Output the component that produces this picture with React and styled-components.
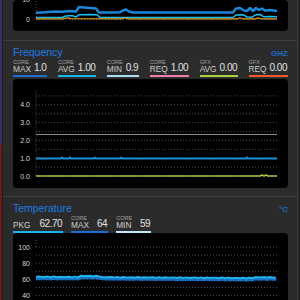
import React from "react";
import styled, { createGlobalStyle } from "styled-components";

const GlobalStyle = createGlobalStyle`
  html, body { margin: 0; padding: 0; background: #2b2b2b; }
  body { font-family: "Liberation Sans", Arial, sans-serif; }
`;

const Window = styled.div`
  width: 300px;
  height: 300px;
  overflow: hidden;
  display: flex;
  background: #2b2b2b;
`;

const EdgeStrip = styled.div`
  width: 2px;
  flex: none;
  background: linear-gradient(to bottom, #3d2d68 0, #3d2d68 145px, #6b1a1a 145px);
  border-right: 1px solid #1c1c1c;
`;

const Panel = styled.div`
  flex: 1;
  min-width: 0;
  display: flex;
  flex-direction: column;
`;

const Rail = styled.div`
  width: 2px;
  flex: none;
  border-left: 1px solid #3a3a3a;
  background: #242424;
`;

const Section = styled.section`
  padding: ${(p) => (p.$first ? "0 9px 9px 10px" : "5px 9px 8px 10px")};
  border-top: ${(p) => (p.$first ? "none" : "1px solid #3d3d3d")};
`;

const Header = styled.div`
  display: flex;
  justify-content: space-between;
  align-items: baseline;
  height: 12px;
`;

const Title = styled.h2`
  margin: 0;
  font-size: 10.5px;
  line-height: 12px;
  font-weight: normal;
  color: #1b7be6;
`;

const Unit = styled.span`
  font-size: 8px;
  font-weight: bold;
  color: #1a6cc8;
`;

const Metrics = styled.div`
  display: flex;
  justify-content: ${(p) => (p.$spread ? "space-between" : "flex-start")};
  gap: ${(p) => (p.$spread ? 7 : 8)}px;
  margin-top: 2px;
`;

const Metric = styled.div`
  display: flex;
  align-items: flex-end;
  gap: ${(p) => p.$gap || 3}px;
  padding: 0 1px 2px 0;
  border-bottom: 2px solid ${(p) => p.$color};
  height: 13px;
`;

const LabelStack = styled.div`
  display: flex;
  flex-direction: column;
`;

const Small = styled.span`
  font-size: 5.5px;
  line-height: 5px;
  color: #a0a0a0;
`;

const Name = styled.span`
  font-size: 8.3px;
  line-height: 8px;
  color: #cfcfcf;
`;

const Value = styled.span`
  font-size: 10px;
  line-height: 11px;
  color: #e2e2e2;
  letter-spacing: -0.5px;
`;

const ChartBox = styled.div`
  margin-top: ${(p) => p.$top || 0}px;
  height: ${(p) => p.$h}px;
  background: #000;
  border-radius: 4px;
  overflow: hidden;
  svg { display: block; }
`;

const poly = (pts) => pts.map((p) => p.join(",")).join(" ");

function Chart({ top, y0, h, ticks, grid, gridTop, lines }) {
  return (
    <ChartBox $h={h} $top={top}>
      <svg width="275" height={h} viewBox={`13 ${y0} 275 ${h}`}>
        <line x1="36" y1={gridTop} x2="36" y2={grid[0]} stroke="#555" strokeDasharray="1 2" />
        {grid.map((y) => (
          <line key={y} x1="36" y1={y} x2="277" y2={y} stroke="#4d4d4d" strokeDasharray="1 2" />
        ))}
        {ticks.map(([y, label]) => (
          <text
            key={label}
            x="30"
            y={y + 2.5}
            textAnchor="end"
            fontSize="7"
            fill="#d8d8d8"
            fontFamily="Liberation Sans, Arial, sans-serif"
          >
            {label}
          </text>
        ))}
        {lines.map((l, i) => (
          <polyline
            key={i}
            points={poly(l.pts)}
            fill="none"
            stroke={l.color}
            strokeWidth={l.w}
            strokeLinejoin="round"
          />
        ))}
      </svg>
    </ChartBox>
  );
}

const topLines = [
  {
    color: "#1e86d8",
    w: 2.5,
    pts: [[36,12.7],[45,12.3],[55,11.5],[62,11.8],[70,11],[76,11.5],[79,7],[84,7.5],[90,8],[96,8.5],[99,12.5],[110,12.5],[120,12.3],[123,10.5],[126,9.5],[129,11.5],[133,12.5],[160,12.5],[200,12.6],[233,12.5],[236,8.5],[240,8],[244,10.5],[247,11],[250,8],[253,11],[256,8],[259,10],[262,8.5],[265,10.5],[270,10],[277,11]],
  },
  {
    color: "#18bff0",
    w: 1.5,
    pts: [[36,17.5],[62,17.5],[66,16],[72,15.5],[76,17],[79,14.8],[90,14.5],[97,14.8],[100,17.5],[233,17.5],[236,15],[243,14.7],[247,17],[252,17.2],[256,14.7],[260,14.5],[264,16.8],[270,16.5],[277,16.8]],
  },
  {
    color: "#e8a020",
    w: 1.2,
    pts: [[36,18.8],[64,18.8],[67,17.8],[71,18.6],[122,18.8],[125,17.8],[128,18.8],[238,18.8],[240,17.8],[243,18.8],[256,18.8],[258,17.9],[261,18.8],[277,18.8]],
  },
];

const fy = (v) => 175.5 - v * 17.8;
const freqGrid = [0, 0.5, 1, 1.5, 2, 2.5, 3, 3.5, 4, 4.5].map(fy);
const freqTicks = [0, 1, 2, 3, 4].map((v) => [fy(v), v.toFixed(1)]);
const freqLines = [
  { color: "#8a8a8a", w: 1, pts: [[36,134],[277,134]] },
  {
    color: "#1b8fd6",
    w: 2.2,
    pts: [[36,158],[61,158],[62,157.2],[63,158],[69,158],[70,157.2],[71,158],[94,158],[95,157.2],[96,158],[120,158],[121,157.2],[122,158],[246,158],[247,157],[248,158],[277,158]],
  },
  {
    color: "#a6c93c",
    w: 1.6,
    pts: [[36,175.5],[260,175.5],[262,174.6],[264,175.5],[266,174.6],[268,175.5],[277,175.5]],
  },
];

const ty = (v) => 247 + (100 - v) * 0.81;
const tempGrid = [100, 90, 80, 70, 60, 50, 40].map(ty);
const tempTicks = [100, 80, 60, 40].map((v) => [ty(v), String(v)]);

const tempLine = (base, amp) => {
  const pts = [];
  for (let x = 36; x <= 277; x += 3) {
    let y = base + (x - 36) * 0.006 + Math.sin(x * 0.9) * amp;
    if (x > 78 && x < 100) y -= 1.1;
    if (x > 252) y -= 0.8;
    pts.push([x, y.toFixed(1)]);
  }
  return pts;
};

const tempLines = [
  { color: "#1470c0", w: 2.5, pts: tempLine(278.8, 0.3) },
  { color: "#22b4ee", w: 2, pts: tempLine(276.8, 0.4) },
];

function Item({ small, name, value, color, gap }) {
  return (
    <Metric $color={color} $gap={gap}>
      <LabelStack>
        {small && <Small>{small}</Small>}
        <Name>{name}</Name>
      </LabelStack>
      <Value>{value}</Value>
    </Metric>
  );
}

export default function App() {
  return (
    <Window>
      <GlobalStyle />
      <EdgeStrip />
      <Panel>
        <Section $first>
          <Chart
            y0={0}
            h={31}
            grid={[19.7, -0.7]}
            gridTop={-2}
            ticks={[[-0.7, "10"], [19.7, "0"]]}
            lines={topLines}
          />
        </Section>

        <Section>
          <Header>
            <Title>Frequency</Title>
            <Unit>GHZ</Unit>
          </Header>
          <Metrics $spread>
            <Item small="CORE" name="MAX" value="1.0" color="#1c6fd1" />
            <Item small="CORE" name="AVG" value="1.00" color="#19b4ea" />
            <Item small="CORE" name="MIN" value="0.9" color="#a9e1f5" />
            <Item small="CORE" name="REQ" value="1.00" color="#f07fb0" />
            <Item small="GFX" name="AVG" value="0.00" color="#a8d23c" />
            <Item small="GFX" name="REQ" value="0.00" color="#f05a28" />
          </Metrics>
          <Chart
            top={1.5}
            y0={78.5}
            h={109.5}
            grid={freqGrid}
            gridTop={90}
            ticks={freqTicks}
            lines={freqLines}
          />
        </Section>

        <Section>
          <Header>
            <Title>Temperature</Title>
            <Unit>°C</Unit>
          </Header>
          <Metrics>
            <Item name="PKG" value="62.70" color="#19b4ea" gap={9} />
            <Item small="CORE" name="MAX" value="64" color="#1c6fd1" gap={8} />
            <Item small="CORE" name="MIN" value="59" color="#bfe8f8" gap={8} />
          </Metrics>
          <Chart
            y0={233}
            h={80}
            grid={tempGrid}
            gridTop={240}
            ticks={tempTicks}
            lines={tempLines}
          />
        </Section>
      </Panel>
      <Rail />
    </Window>
  );
}
